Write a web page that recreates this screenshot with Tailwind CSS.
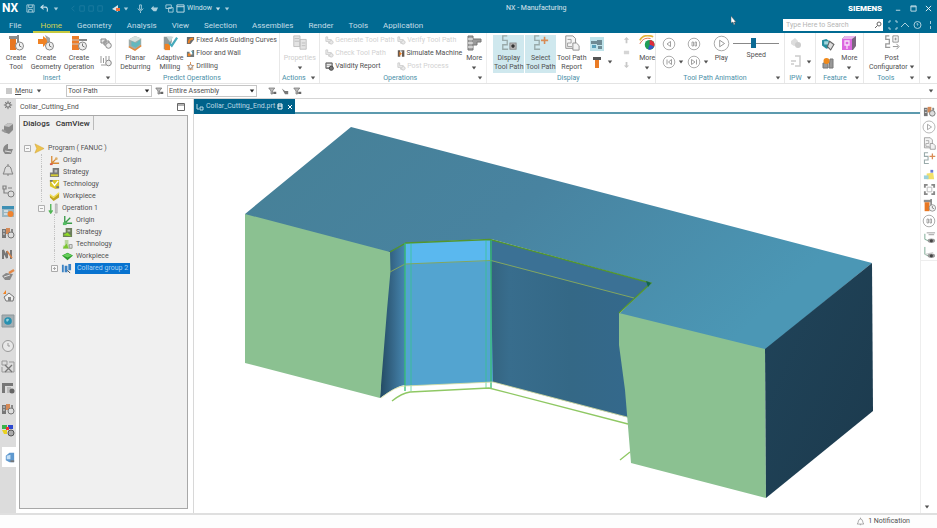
<!DOCTYPE html>
<html lang="en">
<head>
<meta charset="utf-8">
<title>NX - Manufacturing</title>
<script src="https://cdn.jsdelivr.net/npm/@tailwindcss/browser@4"></script>
</head>
<body class="h-screen flex flex-col overflow-hidden bg-white text-[7px] leading-[9px] text-[#505050]" style="font-family:Roboto,'Noto Sans',sans-serif">

<svg class="hidden" aria-hidden="true">
  <symbol id="dn" viewBox="0 0 6 4"><path d="M.8.5h4.400L3 3.500z" fill="currentColor"/></symbol>
  <symbol id="tool" viewBox="0 0 16 16"><path d="M1 1h9v3H1z" fill="#8d8d8d"/><path d="M2 4h6v11H2z" fill="#e87722"/><path d="M10 0v9" stroke="#888" stroke-width="2"/><circle cx="11.500" cy="11" r="4" fill="#f2f2f2" stroke="#888"/><path d="M11.500 8.500V11l2 1" stroke="#777" fill="none"/></symbol>
  <symbol id="geo" viewBox="0 0 16 16"><path d="M0 4h5V1l6 5-6 6V9H0z" fill="#f08223"/><path d="M7 0l5 3v5l-2 1z" fill="#a5a5a5"/><circle cx="11.500" cy="11" r="4" fill="#eee" stroke="#888"/><path d="M11.500 8.500V11l2 1" stroke="#777" fill="none"/></symbol>
  <symbol id="oper" viewBox="0 0 16 16"><path d="M1 1h7v14H1z" fill="#ec7d2a"/><path d="M1 5h7M1 9h7" stroke="#c9c9c9"/><path d="M8 5h8" stroke="#888" stroke-width="2"/><circle cx="11.500" cy="11" r="4" fill="#eee" stroke="#888"/><path d="M11.500 8.500V11l2 1" stroke="#777" fill="none"/></symbol>
  <symbol id="copyop" viewBox="0 0 12 12"><path d="M1 2h5v4H1zM4 4h5v4H4z" fill="#e4e4e4" stroke="#888"/><circle cx="8.500" cy="8.500" r="2.800" fill="#eee" stroke="#888"/></symbol>
  <symbol id="lineop" viewBox="0 0 12 12"><path d="M1 1v7M3.500 3v5M6 1v5M1 10h5M9 1v4" fill="none" stroke="#999"/><circle cx="8.500" cy="8" r="2.800" fill="#eee" stroke="#888"/></symbol>
  <symbol id="plan" viewBox="0 0 18 18"><path d="M2 5l7-4 7 3v8l-7 5-7-4z" fill="#9eaca9"/><path d="M2 5l7-4 7 3-7 4z" fill="#d9e2de"/><path d="M5 7l5 2 5-4v5l-5 4-5-2z" fill="#63b8bf"/><path d="M2 13l7 4 7-5" stroke="#e48a3c" fill="none" stroke-width="1.500"/></symbol>
  <symbol id="adapt" viewBox="0 0 18 18"><path d="M2 2h9v6l-4 8H2z" fill="#909a9a"/><path d="M3 10h6v7H3z" fill="#f08223"/><path d="M8 9l3 3 6-9" stroke="#47aabb" fill="none" stroke-width="2.500"/><path d="M5 2h8l-4 6z" fill="#c9d6d6"/></symbol>
  <symbol id="axis" viewBox="0 0 10 10"><path d="M1 1h8v3L5 9H1z" fill="#6b6b6b"/><path d="M3 8c0-4 2-5 5-5" stroke="#f08223" fill="none" stroke-width="2"/></symbol>
  <symbol id="floor" viewBox="0 0 10 10"><path d="M1 3h3v3h3V1h2v8H1z" fill="#70787a"/><path d="M2 5h3v3H2z" fill="#f08223"/><path d="M6 2l2 3" stroke="#3b9bb0"/></symbol>
  <symbol id="drill" viewBox="0 0 10 10"><path d="M2 4h6v5H2z" fill="#d9bfa8"/><path d="M5 0v9M1 4h8" stroke="#e08a48"/><circle cx="5" cy="5" r="2" fill="#fff" stroke="#888"/></symbol>
  <symbol id="props" viewBox="0 0 18 18"><path d="M2 1h7v12H2zM9 5h7v11H9z" fill="#e3e3e3" stroke="#bcbcbc"/><path d="M3 4h5M3 7h5M11 9h4M11 12h4" stroke="#bcbcbc"/></symbol>
  <symbol id="report" viewBox="0 0 10 10"><path d="M1 1h7v6H1z" fill="#aaa" stroke="#555"/><path d="M2 3h5M2 5h4" stroke="#fff"/><circle cx="7" cy="7" r="2.300" fill="#777" stroke="#444"/></symbol>
  <symbol id="sim" viewBox="0 0 10 10"><path d="M1 1h3v8H1zM6 1h3v8H6z" fill="#665950"/><path d="M3 3l3 2-3 3z" fill="#f08223"/><path d="M4 1h3v3z" fill="#888"/></symbol>
  <symbol id="gen" viewBox="0 0 10 10"><path d="M1 1h2v3h4v4H4V6H1z" fill="#ececec" stroke="#ccc"/><circle cx="7" cy="7" r="2" fill="#e8e8e8" stroke="#ccc"/></symbol>
  <symbol id="moreop" viewBox="0 0 16 16"><path d="M2 1h5v14H2z" fill="#a5a5a5" stroke="#777"/><path d="M2 4h5M2 8h5M2 12h5" stroke="#fff"/><path d="M7 4h8v3h-4v3H7" fill="#999" stroke="#777"/></symbol>
  <symbol id="path" viewBox="0 0 18 18"><path d="M7 1H2v5h5v5H2v5h6" fill="none" stroke="#9aa" stroke-width="1.500"/><rect x="10" y="9" width="7" height="7" fill="#bbb" stroke="#888"/><circle cx="13.500" cy="12.500" r="2" fill="#333"/></symbol>
  <symbol id="selp" viewBox="0 0 18 18"><path d="M7 1H2v5h5v5H2v5h6" fill="none" stroke="#9aa" stroke-width="1.500"/><path d="M13 2v8M9 6h8" stroke="#d98b55" stroke-width="1.800"/></symbol>
  <symbol id="rep" viewBox="0 0 18 18"><path d="M2 1h8l3 3v11H2z" fill="#f4f4f4" stroke="#888"/><path d="M4 5h4v4H4v4h5" stroke="#999" fill="none"/><path d="M10 9h4l3 3v5h-7z" fill="#f2f2f2" stroke="#888"/></symbol>
  <symbol id="blocks" viewBox="0 0 14 14"><rect width="14" height="14" fill="#bfe3ea"/><path d="M1 4h6v3H1zM7 3h5v5H7zM8 9h4v3H8z" fill="#6f8b94"/><path d="M2 8h4v3H2z" fill="#5aa0b8"/></symbol>
  <symbol id="cutter" viewBox="0 0 12 12"><path d="M2 1h8v3H2z" fill="#555"/><path d="M4 4h4v8H4z" fill="#ea7b25"/></symbol>
  <symbol id="up" viewBox="0 0 8 8"><path d="M4 0l3 3H5v4H3V3H1z" fill="#c8c8c8"/></symbol>
  <symbol id="mid" viewBox="0 0 8 8"><path d="M1 2h6v4H1z" fill="#d5d5d5"/></symbol>
  <symbol id="down" viewBox="0 0 8 8"><path d="M4 8L1 5h2V1h2v4h2z" fill="#c8c8c8"/></symbol>
  <symbol id="color" viewBox="0 0 18 18"><path d="M1 6C4 0 10 0 16 2" stroke="#e5b53b" fill="none" stroke-width="2"/><path d="M1 10C4 4 8 3 13 4" stroke="#e2603a" fill="none"/><circle cx="12" cy="11" r="5.500" fill="#1f9e57"/><path d="M12 11V5.500A5.500 5.500 0 0 1 17 13z" fill="#df2b3c"/><path d="M12 11l5 2a5.500 5.500 0 0 1-7 3z" fill="#3558c8"/></symbol>
  <symbol id="prev" viewBox="0 0 14 14"><circle cx="7" cy="7" r="5.800" fill="#fff" stroke="#999" stroke-width=".8"/><path d="M8.500 4.500v5L5 7z" fill="none" stroke="#888" stroke-width=".8"/></symbol>
  <symbol id="stop" viewBox="0 0 14 14"><circle cx="7" cy="7" r="5.800" fill="#fff" stroke="#999" stroke-width=".8"/><path d="M5 5h1.500v4H5zM8 5h1.500v4H8z" fill="none" stroke="#888" stroke-width=".7"/></symbol>
  <symbol id="first" viewBox="0 0 14 14"><circle cx="7" cy="7" r="5.800" fill="#fff" stroke="#999" stroke-width=".8"/><path d="M9.500 4.500v5L6.500 7zM5 4.500v5" fill="none" stroke="#888" stroke-width=".8"/></symbol>
  <symbol id="last" viewBox="0 0 14 14"><circle cx="7" cy="7" r="5.800" fill="#fff" stroke="#999" stroke-width=".8"/><path d="M4.500 4.500v5L8 7zM9.500 4.500v5" fill="none" stroke="#888" stroke-width=".8"/></symbol>
  <symbol id="play" viewBox="0 0 14 14"><circle cx="7" cy="7" r="6" fill="#fff" stroke="#999" stroke-width=".7"/><path d="M5.500 4.300v5.400L9.500 7z" fill="none" stroke="#888" stroke-width=".7"/></symbol>
  <symbol id="ipw" viewBox="0 0 12 12"><path d="M1 4l4-3 3 3v4l-4 1-3-2z" fill="#ddd"/><circle cx="8" cy="8" r="3" fill="#ccc"/></symbol>
  <symbol id="ipw2" viewBox="0 0 12 12"><path d="M5 1h5v10H5M1 6h5M1 9h3" fill="none" stroke="#ccc" stroke-width="1.500"/></symbol>
  <symbol id="feat" viewBox="0 0 12 12"><path d="M0 2l4-1 3 2v6l-3 1-4-3z" fill="#278f9f"/><path d="M2 3h4v3H2z" fill="#a4d7dd"/><path d="M7 3l4 3-3 5-3-3z" fill="#ddd" stroke="#666"/></symbol>
  <symbol id="feat2" viewBox="0 0 12 12"><path d="M1 6h5v5H1zM8 2h3v9H7z" fill="#999" stroke="#777"/><circle cx="4.500" cy="4" r="3" fill="#f08a1c"/></symbol>
  <symbol id="cube" viewBox="0 0 16 16"><path d="M1 4l3-3h11v10l-3 4H1z" fill="#7b6680"/><path d="M1 4h10v11H1z" fill="#dd67e0"/><path d="M1 4l3-3h11l-4 3z" fill="#e9b4ec"/><path d="M4 6h4v4H4zM6 10v4" stroke="#f8dff9" fill="none" stroke-width="1.300"/></symbol>
  <symbol id="post" viewBox="0 0 18 18"><path d="M6 1H2v4h4v5H2v4h5" fill="none" stroke="#999" stroke-width="1.400"/><path d="M10 1h6v7h-6zM10 13h6m-2-3l3 3-3 3" fill="none" stroke="#888"/><path d="M12 3h2v3h-2z" fill="#999"/></symbol>
  <symbol id="cubeg" viewBox="0 0 14 14"><path d="M3 5l4-3 5 1v6l-4 4-5-2z" fill="#888"/><path d="M3 5l4-3 5 1-4 3z" fill="#c4c4c4"/><path d="M1 9l4 2" stroke="#999" stroke-width="2"/></symbol>
  <symbol id="clip" viewBox="0 0 14 14"><path d="M2 9c0-5 3-7 5-7v5h5l-2 5H4z" fill="#888"/><path d="M4 9l6 1" stroke="#ddd"/></symbol>
  <symbol id="bell" viewBox="0 0 14 14"><path d="M2 11c2-2 1-8 5-8s3 6 5 8zM6 12h2M7 1v2" fill="none" stroke="#808080"/></symbol>
  <symbol id="treei" viewBox="0 0 14 14"><path d="M2 2h3v3H2zM3 5v4h4M7 4h4" fill="none" stroke="#808080" stroke-width="1.200"/><circle cx="10" cy="10" r="3" fill="#ddd" stroke="#808080"/></symbol>
  <symbol id="panel" viewBox="0 0 14 14"><path d="M1 1h12v11H1z" fill="#9bb7c2"/><path d="M1 1h12v3H1z" fill="#3e90b4"/><path d="M3 6h4M3 9h4" stroke="#fff"/><circle cx="9.500" cy="9" r="3" fill="#ef8431"/></symbol>
  <symbol id="mach" viewBox="0 0 14 14"><path d="M1 3h4v9H1z" fill="#777"/><path d="M5 2h4v6H5z" fill="#d48a58"/><path d="M2 5h2M2 8h2" stroke="#ddd"/><circle cx="10" cy="9" r="3" fill="#ddd" stroke="#777"/><path d="M10 3h2v3h-2z" fill="#888"/></symbol>
  <symbol id="zig" viewBox="0 0 14 14"><path d="M2 12V3l4 8V4M10 3v9" fill="none" stroke="#777" stroke-width="2"/><path d="M6 4l5 7" stroke="#d98347" stroke-width="1.500"/></symbol>
  <symbol id="hand" viewBox="0 0 14 14"><path d="M1 8l4-3 7 1-3 6H4z" fill="#888"/><path d="M3 9l6-2" stroke="#ddd"/><path d="M8 5l5-3" stroke="#e38847" stroke-width="2.500"/></symbol>
  <symbol id="house" viewBox="0 0 14 14"><path d="M3 8l5-4 5 4-1 4H5z" fill="#eee" stroke="#777"/><path d="M2 5l3-4v4z" fill="#f08223"/><path d="M7 8h3v4H7z" fill="#888"/></symbol>
  <symbol id="globe" viewBox="0 0 14 14"><path d="M1 1h12v12H1z" fill="#a5afb3" stroke="#8d979b"/><circle cx="7" cy="7" r="3.800" fill="#2690b0"/><path d="M5 6c1-2 3-1 3 0l-2 2z" fill="#97d1dd"/></symbol>
  <symbol id="clock" viewBox="0 0 14 14"><circle cx="7" cy="7" r="5.500" fill="#e8e8e8" stroke="#999"/><path d="M7 4v3h2" fill="none" stroke="#999"/></symbol>
  <symbol id="tools" viewBox="0 0 14 14"><path d="M1 1h5v4H1zM8 2h5v10H1V7" fill="none" stroke="#999"/><path d="M4 5l7 7M11 5l-7 7" stroke="#777" stroke-width="1.300"/></symbol>
  <symbol id="cal" viewBox="0 0 14 14"><path d="M1 2h11v3H4v7H1z" fill="#777"/><path d="M6 6h4v6H6z" fill="#bbb"/><circle cx="11" cy="10" r="2.500" fill="#666"/></symbol>
  <symbol id="rgb" viewBox="0 0 14 14"><path d="M1 2h5v4H1z" fill="#37b34a"/><path d="M7 2h5v4H7z" fill="#2c48d0"/><path d="M1 7h5v4H3z" fill="#ead21f"/><path d="M5 4h3v3H5z" fill="#e33"/><circle cx="10" cy="10" r="3" fill="#aaa" stroke="#555"/></symbol>
  <symbol id="book" viewBox="0 0 14 14"><path d="M3 5l4-3h5v10H7L3 10z" fill="#5f99cf"/><path d="M4 5l4-1v5H4z" fill="#c6e0f6"/><path d="M8 10h4v2H8z" fill="#777"/></symbol>
  <symbol id="gear" viewBox="0 0 12 12"><circle cx="6" cy="6" r="2.600" fill="none" stroke="#777" stroke-width="1.400"/><path d="M6 1v2M6 9v2M1 6h2M9 6h2M2.500 2.500l1 1M8.500 8.500l1 1M9.500 2.500l-1 1M3.500 8.500l-1 1" stroke="#777" stroke-width="1.200"/></symbol>
  <symbol id="shade" viewBox="0 0 14 14"><path d="M4 6l7-1 1 7H4z" fill="#f3e06a"/><path d="M8 2h3v3H8z" fill="#6b79d2"/><path d="M1 8h5v4H1z" fill="#9bd2dc"/></symbol>
  <symbol id="fit" viewBox="0 0 14 14"><path d="M2 5V2h3M9 2h3v3M12 9v3H9M5 12H2V9" fill="none" stroke="#888" stroke-width="2"/><path d="M4.500 4.500h5v5h-5z" fill="none" stroke="#bbb"/></symbol>
  <symbol id="csys" viewBox="0 0 14 14"><path d="M2 1v8l5 2" fill="none" stroke="#77a890"/><path d="M2 9l9-2" stroke="#ccc"/><ellipse cx="9" cy="10.500" rx="4" ry="2.300" fill="#999"/><circle cx="9" cy="10.500" r="1.700" fill="#444"/></symbol>
  <symbol id="csyst" viewBox="0 0 14 14"><path d="M2 3v6l5 2" fill="none" stroke="#77a890"/><path d="M4 2h9M6 4h6" stroke="#999"/><ellipse cx="9" cy="10.500" rx="4" ry="2.300" fill="#999"/><circle cx="9" cy="10.500" r="1.700" fill="#444"/></symbol>
  <symbol id="origin" viewBox="0 0 12 12"><path d="M3 1v8h8M3 9l5-5" fill="none" stroke="#d88a35" stroke-width="1.400"/><circle cx="8" cy="4" r="1.500" fill="#dfb06b"/><path d="M1 9h3v2H1z" fill="#d65f4c"/></symbol>
  <symbol id="origing" viewBox="0 0 12 12"><path d="M3 1v8h8M3 9l6-6" fill="none" stroke="#3b9c4a" stroke-width="1.500"/><path d="M1 8h4v3H1z" fill="#56bd65"/></symbol>
  <symbol id="strat" viewBox="0 0 12 12"><path d="M4 1h7v10H1V6h3z" fill="#777"/><path d="M2 8h8v2H2z" fill="#d7cc33"/><path d="M6 3h3v3H6z" fill="#bbb"/></symbol>
  <symbol id="stratg" viewBox="0 0 12 12"><path d="M4 1h7v10H1V6h3z" fill="#6b7d5c"/><path d="M1 9l5-3 4 4z" fill="#8fdc26"/><path d="M6 3h3v2H6z" fill="#bbb"/></symbol>
  <symbol id="tech" viewBox="0 0 12 12"><path d="M1 1h10v9l-4 1-6-3z" fill="#d9c529"/><path d="M3 3l3 4 4-5" fill="none" stroke="#fff" stroke-width="1.500"/><path d="M1 1h3v2H1zM8 8h3v2H8z" fill="#777"/></symbol>
  <symbol id="techg" viewBox="0 0 12 12"><path d="M3 1h4v5h4v5H1V7h2z" fill="#b8d69c"/><path d="M1 10l4-5 2 5z" fill="#79c62c"/><path d="M8 6h3v4H8z" fill="#ddd" stroke="#999"/></symbol>
  <symbol id="work" viewBox="0 0 12 12"><path d="M1 4l4 2 6-4v5l-6 4-4-4z" fill="#c2a51e"/><path d="M1 4l4 3 6-5" fill="none" stroke="#f1df5a" stroke-width="1.500"/></symbol>
  <symbol id="workg" viewBox="0 0 12 12"><path d="M0 5l6-3 6 3-6 5z" fill="#2d9c2f"/><path d="M1 5l5-2.500L11 5 6 7z" fill="#66cf5a"/></symbol>
  <symbol id="prog" viewBox="0 0 12 12"><path d="M1 1l10 5-10 5 2-5z" fill="#edc34c" stroke="#d2a637" stroke-width=".6"/></symbol>
  <symbol id="opn" viewBox="0 0 12 12"><path d="M3 1v9M1 8l2 3 2-3" fill="none" stroke="#50b554" stroke-width="1.500"/><path d="M8 1h2v10H8z" fill="#ccc" stroke="#999" stroke-width=".6"/></symbol>
  <symbol id="coll" viewBox="0 0 12 12"><path d="M1 2h2v8H1zM4 3h3v7H4zM8 1h3v7H8z" fill="#3b82c4"/><path d="M7 8l3 3" stroke="#444"/></symbol>
  <symbol id="filt" viewBox="0 0 12 10"><path d="M1 1h8L6 5v4H4V5z" fill="#bbb" stroke="#777"/><path d="M7 6h4v3H7z" fill="#666"/></symbol>
  <symbol id="plusbox" viewBox="0 0 7 7"><path d="M.5.5h6v6h-6zM2 3.500h3M3.500 2v3" fill="#f8f8f8" stroke="#aaa"/></symbol>
  <symbol id="minbox" viewBox="0 0 7 7"><path d="M.5.5h6v6h-6zM2 3.500h3" fill="#f8f8f8" stroke="#b0b0b0"/></symbol>
</svg>

<header class="bg-[#006a92] text-white/85 shrink-0">
  <div class="relative h-[17px] flex items-center">
    <span class="pl-[2px] w-[26px] text-[12px] font-bold text-white">NX</span>
    <div class="flex items-center text-[#a9cfdd]">
      <button aria-label="Save" class="w-[14px]"><svg class="size-[9px]" viewBox="0 0 10 10"><path d="M1 1h8v8H1zM3 1v3h4V1M3 9V6h4v3" fill="none" stroke="currentColor"/></svg></button>
      <button aria-label="Undo" class="w-[10px]"><svg class="size-[9px]" viewBox="0 0 10 10"><path d="M4 1L1 3.500 4 6M1 3.500h5q3 0 2 5" fill="none" stroke="#c7e0ea" stroke-width="1.200"/></svg></button>
      <svg class="w-[6px] h-[4px] ml-[3px]"><use href="#dn"/></svg>
      <svg class="w-[44px] h-[9px] ml-[6px]" viewBox="0 0 44 10"><path d="M8 2L5 5l3 3M14 2h5v6h-5zM24 2h5v6h-5zM34 2h5v6h-5z" fill="none" stroke="#1c7a9f"/></svg>
      <button aria-label="Resume" class="ml-[2px]"><svg class="w-[10px] h-[9px]" viewBox="0 0 10 9"><path d="M1 5l6-4v7z" fill="#d9e2e5"/><path d="M5 4h4v3H5z" fill="#ee6c3a"/></svg></button>
      <svg class="w-[6px] h-[4px] ml-[2px]"><use href="#dn"/></svg>
      <button aria-label="Voice" class="ml-[7px]"><svg class="size-[9px]" viewBox="0 0 10 10"><path d="M4 1h2v5H4zM2 5q3 5 6 0M5 8v2" fill="none" stroke="currentColor"/></svg></button>
      <button aria-label="Touch" class="ml-[5px]"><svg class="size-[9px]" viewBox="0 0 10 10"><path d="M1 5l3-3v2h5L7 8H4z" fill="currentColor"/></svg></button>
      <button aria-label="Cascade" class="ml-[6px]"><svg class="size-[9px]" viewBox="0 0 10 10"><path d="M1 1h6v4H1zM4 4h5v5H4z" fill="none" stroke="currentColor"/></svg></button>
      <button class="ml-[2px] flex items-center gap-[2px] text-[#cfe4ec]"><svg class="size-[9px]" viewBox="0 0 10 10"><path d="M1 1h8v8H1zM1 3h8" fill="none" stroke="currentColor"/></svg>Window<svg class="w-[6px] h-[4px] ml-[1px]"><use href="#dn"/></svg></button>
      <svg class="w-[6px] h-[4px] ml-[3px]"><use href="#dn"/></svg>
    </div>
    <h1 class="absolute left-[54%] top-[4px] whitespace-nowrap">NX - Manufacturing</h1>
    <div class="ml-auto flex items-center pr-[5px]">
      <span class="text-[8px] font-black text-white mr-[13px]">SIEMENS</span>
      <button aria-label="Minimize" class="w-[15px]"><svg class="size-[7px]" viewBox="0 0 8 8"><path d="M1 6h5" stroke="#cfe4ec"/></svg></button>
      <button aria-label="Maximize" class="w-[15px]"><svg class="size-[7px]" viewBox="0 0 8 8"><path d="M1 1h6v6H1zM1 2h6" fill="none" stroke="#cfe4ec"/></svg></button>
      <button aria-label="Close"><svg class="size-[7px]" viewBox="0 0 8 8"><path d="M1 1l6 6M7 1L1 7" stroke="#fff"/></svg></button>
    </div>
    <svg class="absolute left-[78%] top-[16px] w-[6px] h-[9px] z-10" viewBox="0 0 6 9"><path d="M0 0v7l2-1 1 3 1-1-1-2h2z" fill="#fff" stroke="#555" stroke-width=".5"/></svg>
  </div>
  <div class="h-[16px] flex items-center">
    <nav class="flex items-center gap-[15px] pl-[9px] h-full whitespace-nowrap text-[8px] text-[#c3dde7]">
      <a href="#">File</a>
      <a href="#" class="text-[#d3d452] h-full flex items-center border-b-2 border-[#c6c93f] pt-[2px] px-[8px] -mr-[8px] -ml-[4px]">Home</a>
      <a href="#">Geometry</a><a href="#">Analysis</a><a href="#">View</a><a href="#">Selection</a><a href="#">Assemblies</a><a href="#">Render</a><a href="#">Tools</a><a href="#">Application</a>
    </nav>
    <div class="ml-auto flex items-center pr-[4px]">
      <label class="relative flex"><input type="search" aria-label="Search" placeholder="Type Here to Search" class="w-[100px] h-[12px] bg-white px-[3px] text-[7px] placeholder:text-[#b5b5b5]"><svg class="absolute right-[1px] top-[2px] size-[8px]" viewBox="0 0 8 8"><circle cx="5" cy="3" r="2" fill="none" stroke="#666"/><path d="M3.500 4.500L1 7" stroke="#666"/></svg></label>
      <svg class="ml-[4px] w-[46px] h-[10px]" viewBox="0 0 46 10"><path d="M2 3V1h2M8 1h2v2M2 7v2h2M8 9h2V7M14 7l4-4 4 4M43.500 1v3M43.500 6v3" fill="none" stroke="#a9cfdd"/><circle cx="30.500" cy="5" r="3.500" fill="none" stroke="#a9cfdd"/><path d="M29.500 4q1-1 1.500 0l-.5 1.500" fill="none" stroke="#a9cfdd"/></svg>
    </div>
  </div>
</header>

<section aria-label="Ribbon" class="grid grid-cols-[117fr_164fr_41fr_166fr_170fr_129fr_32fr_45fr_56fr_17fr] h-[51px] shrink-0 border-b border-[#e4e4e4] text-center whitespace-nowrap">
  <div class="flex flex-col border-r border-[#e8e8e8]">
    <div class="flex h-[41px] pt-[2px]">
      <button class="w-[32px] flex flex-col items-center gap-[3px]"><svg class="size-[16px]"><use href="#tool"/></svg><span>Create<br>Tool</span></button>
      <button class="w-[28px] flex flex-col items-center gap-[3px]"><svg class="size-[16px]"><use href="#geo"/></svg><span>Create<br>Geometry</span></button>
      <button class="w-[38px] flex flex-col items-center gap-[3px]"><svg class="size-[16px]"><use href="#oper"/></svg><span>Create<br>Operation</span></button>
      <div class="w-[16px] flex flex-col items-center gap-[6px] pt-[2px]"><svg class="size-[12px]"><use href="#copyop"/></svg><svg class="size-[12px]"><use href="#lineop"/></svg></div>
    </div>
    <div class="relative pr-[12px] text-[#4a8fa8]">Insert<svg class="absolute right-[4px] top-[2px] w-[6px] h-[4px] text-[#555]"><use href="#dn"/></svg></div>
  </div>
  <div class="flex flex-col">
    <div class="flex h-[41px] pt-[2px]">
      <button class="w-[38px] flex flex-col items-center gap-[3px]"><svg class="size-[16px]"><use href="#plan"/></svg><span>Planar<br>Deburring</span></button>
      <button class="w-[31px] flex flex-col items-center gap-[3px]"><svg class="size-[16px]"><use href="#adapt"/></svg><span>Adaptive<br>Milling</span></button>
      <div class="flex flex-col gap-[4px] pt-[1px] pl-[1px]">
        <button class="flex gap-[1px]"><svg class="size-[9px]"><use href="#axis"/></svg>Fixed Axis Guiding Curves</button>
        <button class="flex gap-[1px]"><svg class="size-[9px]"><use href="#floor"/></svg>Floor and Wall</button>
        <button class="flex gap-[1px]"><svg class="size-[9px]"><use href="#drill"/></svg>Drilling</button>
      </div>
    </div>
    <div class="pr-[12px] text-[#4a8fa8]">Predict Operations</div>
  </div>
  <div class="flex flex-col border-x border-[#e8e8e8]">
    <button class="h-[41px] pt-[2px] flex flex-col items-center gap-[3px] text-[#cdcdcd]"><svg class="size-[16px]"><use href="#props"/></svg>Properties<svg class="w-[6px] h-[4px] text-[#555]"><use href="#dn"/></svg></button>
    <div class="relative pr-[12px] text-[#4a8fa8]">Actions<svg class="absolute right-[3px] top-[2px] w-[6px] h-[4px] text-[#555]"><use href="#dn"/></svg></div>
  </div>
  <div class="flex flex-col border-r border-[#eee]">
    <div class="flex h-[41px] pt-[2px] pl-[5px]">
      <div class="w-[72px] flex flex-col gap-[4px] pt-[1px]">
        <button class="flex gap-[1px] text-[#d2d2d2]"><svg class="size-[9px] shrink-0"><use href="#gen"/></svg>Generate Tool Path</button>
        <button class="flex gap-[1px] text-[#d2d2d2]"><svg class="size-[9px]"><use href="#gen"/></svg>Check Tool Path</button>
        <button class="flex gap-[1px]"><svg class="size-[9px]"><use href="#report"/></svg>Validity Report</button>
      </div>
      <div class="w-[65px] flex flex-col gap-[4px] pt-[1px]">
        <button class="flex gap-[1px] text-[#d2d2d2]"><svg class="size-[9px]"><use href="#gen"/></svg>Verify Tool Path</button>
        <button class="flex gap-[1px]"><svg class="size-[9px]"><use href="#sim"/></svg>Simulate Machine</button>
        <button class="flex gap-[1px] text-[#d2d2d2]"><svg class="size-[9px]"><use href="#gen"/></svg>Post Process</button>
      </div>
      <button class="w-[24px] flex flex-col items-center gap-[3px]"><svg class="size-[16px]"><use href="#moreop"/></svg>More<svg class="w-[6px] h-[4px]"><use href="#dn"/></svg></button>
    </div>
    <div class="relative pr-[6px] text-[#4a8fa8]">Operations<svg class="absolute right-[3px] top-[2px] w-[6px] h-[4px] text-[#555]"><use href="#dn"/></svg></div>
  </div>
  <div class="flex flex-col border-r border-[#e8e8e8]">
    <div class="flex h-[41px] pt-[2px] pl-[6px]">
      <button class="w-[31px] h-[38px] bg-[#cfe8ee] flex flex-col items-center gap-[3px]"><svg class="size-[16px]"><use href="#path"/></svg><span>Display<br>Tool Path</span></button>
      <button class="w-[31px] h-[38px] bg-[#cfe8ee] ml-px flex flex-col items-center gap-[3px]"><svg class="size-[16px]"><use href="#selp"/></svg><span>Select<br>Tool Path</span></button>
      <button class="w-[31px] flex flex-col items-center gap-[3px]"><svg class="size-[16px]"><use href="#rep"/></svg><span>Tool Path<br>Report</span></button>
      <div class="w-[20px] flex flex-col items-center gap-[5px] pt-[2px]"><svg class="size-[14px]"><use href="#blocks"/></svg><svg class="size-[12px]"><use href="#cutter"/></svg></div>
      <svg class="w-[6px] h-[4px] mt-[25px]"><use href="#dn"/></svg>
      <div class="w-[26px] flex flex-col items-center gap-[5px] pt-[2px]"><svg class="size-[7px]"><use href="#up"/></svg><svg class="size-[7px]"><use href="#mid"/></svg><svg class="size-[7px]"><use href="#down"/></svg></div>
      <button class="w-[16px] flex flex-col items-center gap-[3px]"><svg class="size-[16px]"><use href="#color"/></svg>More<svg class="w-[6px] h-[4px]"><use href="#dn"/></svg></button>
    </div>
    <div class="relative pr-[6px] text-[#4a8fa8]">Display<svg class="absolute right-[3px] top-[2px] w-[6px] h-[4px] text-[#555]"><use href="#dn"/></svg></div>
  </div>
  <div class="flex flex-col border-r border-[#e8e8e8]">
    <div class="flex h-[41px] pt-[2px] pl-[6px]">
      <div class="grid grid-cols-[14px_11px_14px_11px] content-start items-center gap-y-[4px] pt-[2px]">
        <button aria-label="Step back" class="flex"><svg class="size-[14px]"><use href="#prev"/></svg></button><span></span><button aria-label="Stop" class="flex"><svg class="size-[14px]"><use href="#stop"/></svg></button><span></span>
        <button aria-label="First" class="flex"><svg class="size-[14px]"><use href="#first"/></svg></button><svg class="w-[6px] h-[4px] ml-[2px]"><use href="#dn"/></svg><button aria-label="Last" class="flex"><svg class="size-[14px]"><use href="#last"/></svg></button><svg class="w-[6px] h-[4px] ml-[2px]"><use href="#dn"/></svg>
      </div>
      <button class="w-[18px] flex flex-col items-center gap-[2px]"><svg class="size-[17px]"><use href="#play"/></svg>Play</button>
      <label class="flex flex-col items-center pl-[3px] pt-[3px] gap-[3px]"><input type="range" value="44" class="w-[46px] h-[10px] appearance-none bg-transparent [&::-webkit-slider-runnable-track]:h-px [&::-webkit-slider-runnable-track]:bg-[#888] [&::-webkit-slider-thumb]:appearance-none [&::-webkit-slider-thumb]:w-[5px] [&::-webkit-slider-thumb]:h-[10px] [&::-webkit-slider-thumb]:-mt-[5px] [&::-webkit-slider-thumb]:bg-[#0c6a94]">Speed</label>
    </div>
    <div class="relative pr-[10px] text-[#4a8fa8]">Tool Path Animation<svg class="absolute right-[3px] top-[2px] w-[6px] h-[4px] text-[#555]"><use href="#dn"/></svg></div>
  </div>
  <div class="flex flex-col border-r border-[#e8e8e8]">
    <div class="flex h-[41px] pt-[4px] pl-[5px]">
      <div class="flex flex-col gap-[6px]"><svg class="size-[12px]"><use href="#ipw"/></svg><svg class="size-[12px]"><use href="#ipw2"/></svg></div>
      <svg class="w-[6px] h-[4px] mt-[23px] ml-[4px]"><use href="#dn"/></svg>
    </div>
    <div class="relative pr-[9px] text-[#4a8fa8]">IPW<svg class="absolute right-[3px] top-[2px] w-[6px] h-[4px] text-[#555]"><use href="#dn"/></svg></div>
  </div>
  <div class="flex flex-col border-r border-[#e8e8e8]">
    <div class="flex h-[41px] pt-[2px] pl-[6px]">
      <div class="flex flex-col gap-[6px] pt-[3px]"><svg class="size-[13px]"><use href="#feat"/></svg><svg class="size-[12px]"><use href="#feat2"/></svg></div>
      <button class="w-[28px] flex flex-col items-center gap-[3px]"><svg class="size-[16px]"><use href="#cube"/></svg>More<svg class="w-[6px] h-[4px]"><use href="#dn"/></svg></button>
    </div>
    <div class="relative pr-[10px] text-[#4a8fa8]">Feature<svg class="absolute right-[3px] top-[2px] w-[6px] h-[4px] text-[#555]"><use href="#dn"/></svg></div>
  </div>
  <div class="flex flex-col border-r border-[#e8e8e8]">
    <button class="h-[41px] pt-[2px] flex flex-col items-center gap-[3px]"><svg class="size-[16px]"><use href="#post"/></svg><span>Post<br>Configurator<svg class="inline w-[6px] h-[4px] ml-px"><use href="#dn"/></svg></span></button>
    <div class="relative pr-[12px] text-[#4a8fa8]">Tools<svg class="absolute right-[4px] top-[2px] w-[6px] h-[4px] text-[#555]"><use href="#dn"/></svg></div>
  </div>
  <div class="flex items-end justify-center pb-[3px]"><svg class="w-[6px] h-[4px]"><use href="#dn"/></svg></div>
</section>

<div role="toolbar" aria-label="Selection bar" class="h-[15px] shrink-0 flex items-center border-b border-[#d5d5d5] pl-[6px]">
  <button class="w-[60px] flex items-center gap-[3px]"><svg class="size-[6px]" viewBox="0 0 6 6"><path d="M0 1h6M0 3h6M0 5h6" stroke="#777" stroke-width=".8"/></svg><span><u>M</u>enu</span><svg class="w-[6px] h-[4px]"><use href="#dn"/></svg></button>
  <span class="relative flex"><select aria-label="Selection type" class="appearance-none w-[86px] h-[12px] border border-[#c6c6c6] bg-white pl-[1px] leading-[9px]"><option>Tool Path</option></select><svg class="absolute right-[2px] top-[4px] w-[6px] h-[4px] text-[#222] pointer-events-none"><use href="#dn"/></svg></span>
  <svg class="w-[9px] h-[8px] mx-[3px]"><use href="#filt"/></svg>
  <span class="relative flex"><select aria-label="Selection scope" class="appearance-none w-[90px] h-[12px] border border-[#c6c6c6] bg-white pl-[1px] leading-[9px]"><option>Entire Assembly</option></select><svg class="absolute right-[2px] top-[4px] w-[6px] h-[4px] text-[#222] pointer-events-none"><use href="#dn"/></svg></span>
  <div class="ml-[11px] flex gap-[4px]"><svg class="w-[9px] h-[8px]"><use href="#filt"/></svg><svg class="w-[8px] h-[8px]" viewBox="0 0 10 10"><path d="M1 2l4 3h4v4H5z" fill="#777"/></svg><svg class="w-[9px] h-[8px]"><use href="#filt"/></svg></div>
  <svg class="w-[6px] h-[4px] ml-auto mr-[3px]"><use href="#dn"/></svg>
</div>

<main class="flex-1 min-h-0 flex">
  <aside aria-label="Resource bar" class="w-[16px] shrink-0 bg-[#dcdcdc] flex flex-col items-center pt-[1px] gap-[7px]">
    <button aria-label="Settings" class="mb-[4px] flex"><svg class="size-[10px]"><use href="#gear"/></svg></button>
    <button aria-label="Assembly navigator" class="flex"><svg class="size-[14px]"><use href="#cubeg"/></svg></button>
    <button aria-label="Constraint navigator" class="flex"><svg class="size-[14px]"><use href="#clip"/></svg></button>
    <button aria-label="Notifications" class="flex"><svg class="size-[14px]"><use href="#bell"/></svg></button>
    <button aria-label="Part navigator" class="flex"><svg class="size-[14px]"><use href="#treei"/></svg></button>
    <button aria-label="Operation navigator" class="flex"><svg class="size-[14px]"><use href="#panel"/></svg></button>
    <button aria-label="Machine navigator" class="flex"><svg class="size-[14px]"><use href="#mach"/></svg></button>
    <button aria-label="Tool path" class="flex"><svg class="size-[14px]"><use href="#zig"/></svg></button>
    <button aria-label="Reuse library" class="flex"><svg class="size-[14px]"><use href="#hand"/></svg></button>
    <button aria-label="Home" class="flex"><svg class="size-[14px]"><use href="#house"/></svg></button>
    <button aria-label="Web browser" class="flex mt-[4px]"><svg class="size-[14px]"><use href="#globe"/></svg></button>
    <button aria-label="History" class="flex mt-[4px]"><svg class="size-[14px]"><use href="#clock"/></svg></button>
    <button aria-label="Process studio" class="flex"><svg class="size-[14px]"><use href="#tools"/></svg></button>
    <button aria-label="Wizards" class="flex"><svg class="size-[14px]"><use href="#cal"/></svg></button>
    <button aria-label="Machines" class="flex"><svg class="size-[14px]"><use href="#mach"/></svg></button>
    <button aria-label="Roles" class="flex"><svg class="size-[14px]"><use href="#rgb"/></svg></button>
    <button aria-label="CamView" class="self-end w-[14px] h-[20px] bg-white flex items-center justify-center mt-[3px]"><svg class="size-[13px]"><use href="#book"/></svg></button>
  </aside>

  <section aria-label="Collar_Cutting_End" class="w-[178px] shrink-0 flex flex-col border-r border-[#d8d8d8] px-[3px] pb-[4px]">
    <div class="h-[16px] flex items-center justify-between pl-[1px] pr-[5px]">Collar_Cutting_End<svg class="size-[8px]" viewBox="0 0 8 8"><path d="M.5.500h7v7h-7zM1 2h6" fill="none" stroke="#666"/></svg></div>
    <div class="flex-1 mr-[2px] bg-[#f0f0f0] border border-[#a8a8a8]">
      <div role="tablist" class="flex h-[14px] items-center text-[8px] text-[#333]">
        <button role="tab" class="px-[3px] font-medium">Dialogs</button>
        <button role="tab" aria-selected="true" class="h-full px-[3px] border-r border-[#bbb] font-medium">CamView</button>
      </div>
      <div role="tree" class="mt-[12px] pl-[4px] [&>div]:flex [&>div]:items-center [&>div]:h-[12px] [&>div]:gap-[3px] [&>div>svg]:shrink-0">
        <div role="treeitem"><svg class="size-[7px]"><use href="#minbox"/></svg><svg class="size-[11px]"><use href="#prog"/></svg>Program ( FANUC )</div>
        <div role="treeitem" class="ml-[17px] pl-[7px] border-l border-dotted border-[#c4c4c4]"><svg class="size-[11px]"><use href="#origin"/></svg>Origin</div>
        <div role="treeitem" class="ml-[17px] pl-[7px] border-l border-dotted border-[#c4c4c4]"><svg class="size-[11px]"><use href="#strat"/></svg>Strategy</div>
        <div role="treeitem" class="ml-[17px] pl-[7px] border-l border-dotted border-[#c4c4c4]"><svg class="size-[11px]"><use href="#tech"/></svg>Technology</div>
        <div role="treeitem" class="ml-[17px] pl-[7px] border-l border-dotted border-[#c4c4c4]"><svg class="size-[11px]"><use href="#work"/></svg>Workpiece</div>
        <div role="treeitem" class="pl-[14px]"><svg class="size-[7px]"><use href="#minbox"/></svg><svg class="size-[11px]"><use href="#opn"/></svg><span>Operation 1</span></div>
        <div role="treeitem" class="ml-[30px] pl-[7px] border-l border-dotted border-[#c4c4c4]"><svg class="size-[11px]"><use href="#origing"/></svg>Origin</div>
        <div role="treeitem" class="ml-[30px] pl-[7px] border-l border-dotted border-[#c4c4c4]"><svg class="size-[11px]"><use href="#stratg"/></svg>Strategy</div>
        <div role="treeitem" class="ml-[30px] pl-[7px] border-l border-dotted border-[#c4c4c4]"><svg class="size-[11px]"><use href="#techg"/></svg>Technology</div>
        <div role="treeitem" class="ml-[30px] pl-[7px] border-l border-dotted border-[#c4c4c4]"><svg class="size-[11px]"><use href="#workg"/></svg>Workpiece</div>
        <div role="treeitem" aria-selected="true" class="pl-[27px]"><svg class="size-[7px]"><use href="#plusbox"/></svg><svg class="size-[11px]"><use href="#coll"/></svg><span class="bg-[#0873cf] text-[#a9d4f7] h-[11px] leading-[11px] px-[2px]">Collared group 2</span></div>
      </div>
    </div>
  </section>

  <section aria-label="Graphics window" class="flex-1 min-w-0 flex flex-col">
    <div class="h-[15px] shrink-0 border-b-2 border-[#5c9aae] flex">
      <button class="h-[15px] bg-[#00628a] text-[#b9d8e4] flex items-center gap-[2px] px-[2px]"><svg class="size-[8px]" viewBox="0 0 8 8"><path d="M1 1v5h2M4 4h3v3H4z" fill="none" stroke="currentColor"/></svg>Collar_Cutting_End.prt<svg class="w-[6px] h-[7px]" viewBox="0 0 6 7"><path d="M1 1h4v5H1zM1 3h4" fill="none" stroke="#fff"/></svg><svg class="size-[6px] ml-[2px]" viewBox="0 0 6 6"><path d="M1 1l4 4M5 1L1 5" stroke="#fff"/></svg></button>
    </div>
    <svg role="img" aria-label="Collar part" class="flex-1 min-h-0 w-full" viewBox="194 114 726 399">
      <defs>
        <linearGradient id="top" x1="0" y1="0" x2="1" y2=".4"><stop offset="0" stop-color="#468096"/><stop offset=".5" stop-color="#4883a0"/><stop offset="1" stop-color="#4b97b5"/></linearGradient>
        <linearGradient id="fil"><stop offset="0" stop-color="#234a62"/><stop offset=".5" stop-color="#36688a"/><stop offset="1" stop-color="#4789b3"/></linearGradient>
        <linearGradient id="wall" x1="0" x2="1"><stop offset="0" stop-color="#34637f"/><stop offset=".12" stop-color="#386d8d"/><stop offset=".5" stop-color="#346886"/><stop offset="1" stop-color="#34698e"/></linearGradient>
        <linearGradient id="side" x1="0" y1="0" x2="1" y2="1"><stop offset="0" stop-color="#20445a"/><stop offset="1" stop-color="#1c3a4d"/></linearGradient>
      </defs>
      <path d="M351 127L872 263 765 350 619 314 651 283 491 239 406 243 390 253 245 215V214z" fill="url(#top)"/>
      <path d="M388 252L406 243V385Q398 385 380 398L383 330z" fill="url(#fil)"/>
      <path d="M405 243L491 239 494 382 405 386z" fill="#53a4d0"/>
      <path d="M406 243L490 239V261L406 264z" fill="#5ab8ef"/>
      <path d="M490 239L651 283 619 313 622 345 630 418 493 382z" fill="url(#wall)"/>
      <path d="M491 240L650 283 634 298 491 261z" fill="#3b7195"/>
      <path d="M245 214L390 252 390.500 271 387 310 380 398 245 363z" fill="#8bc191"/>
      <path d="M619 313L765 349 766 498 631 463 625 390 619 345z" fill="#8bc191"/>
      <path d="M765 349L872 263 873 411 766 498z" fill="url(#side)"/>
      <path d="M390 272L405 264 491 260.500 634 298" fill="none" stroke="#82a660"/>
      <path d="M390 252L406 243 490 239.500 651 283 619 313" fill="none" stroke="#53962e" stroke-width="1.300"/>
      <path d="M405 243V391M491 240V388" stroke="#37bd71" stroke-width="1.300"/>
      <path d="M411 243V391M486 240V388" stroke="#34ca7c" stroke-width=".8" opacity=".8"/>
      <path d="M381 398Q396 386 405 386L493 382 627 417" fill="none" stroke="#d9dfa0" stroke-width=".8"/>
      <path d="M392 401Q402 393 410 392L489 388 628 424M620 460L630 452" fill="none" stroke="#8fc864" stroke-width="1.300"/>
      <path d="M646 281l5 2-3 4z" fill="#12664a"/>
    </svg>
  </section>

  <aside aria-label="View tools" class="w-[17px] shrink-0 flex flex-col justify-between border-l border-[#eeeeee]">
    <div class="h-[162px] pt-[6px] pb-[1px] flex flex-col items-center justify-between border-b border-[#eee]">
      <svg class="size-[13px]"><use href="#mach"/></svg>
      <svg class="size-[14px]"><use href="#play"/></svg>
      <svg class="size-[13px]"><use href="#rep"/></svg>
      <svg class="size-[13px]"><use href="#selp"/></svg>
      <svg class="size-[13px]"><use href="#shade"/></svg>
      <svg class="size-[13px]"><use href="#fit"/></svg>
      <svg class="size-[13px]"><use href="#tool"/></svg>
      <svg class="size-[14px]"><use href="#stop"/></svg>
      <svg class="size-[13px]"><use href="#csyst"/></svg>
      <svg class="size-[13px]"><use href="#csys"/></svg>
    </div>
    <svg class="w-[6px] h-[4px] mb-[4px] ml-[3px]"><use href="#dn"/></svg>
  </aside>
</main>

<footer class="h-[15px] shrink-0 border-t-2 border-[#dfdfdf] bg-[#fdfdfd] flex items-center justify-end pr-[27px] gap-[3px]">
  <svg class="size-[9px]"><use href="#bell"/></svg>1 Notification
</footer>
</body>
</html>
